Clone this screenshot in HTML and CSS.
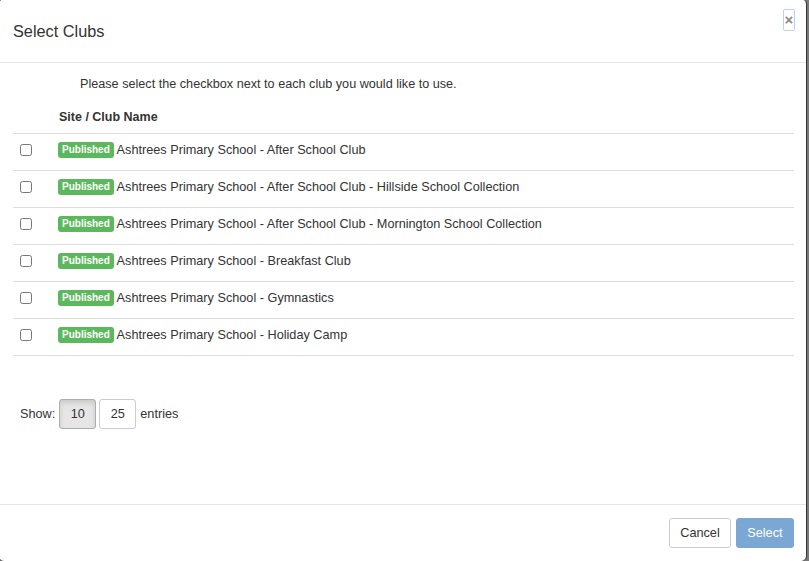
FILE: index.html
```html
<!DOCTYPE html>
<html lang="en">
<head>
  <meta charset="UTF-8">
  <title>Select Clubs</title>
  <link rel="stylesheet" href="styles.css">
</head>
<body>
  <div class="modal-content">
    <div class="modal-header">
      <h4 class="modal-title">Select Clubs</h4>
      <button type="button" class="close">&times;</button>
    </div>
    <div class="modal-body">
      <p class="intro">Please select the checkbox next to each club you would like to use.</p>
      <table class="table">
        <thead>
          <tr>
            <th class="col-check"></th>
            <th>Site / Club Name</th>
          </tr>
        </thead>
        <tbody>
          <tr>
            <td class="col-check"><input type="checkbox"></td>
            <td><span class="label">Published</span> Ashtrees Primary School - After School Club</td>
          </tr>
          <tr>
            <td class="col-check"><input type="checkbox"></td>
            <td><span class="label">Published</span> Ashtrees Primary School - After School Club - Hillside School Collection</td>
          </tr>
          <tr>
            <td class="col-check"><input type="checkbox"></td>
            <td><span class="label">Published</span> Ashtrees Primary School - After School Club - Mornington School Collection</td>
          </tr>
          <tr>
            <td class="col-check"><input type="checkbox"></td>
            <td><span class="label">Published</span> Ashtrees Primary School - Breakfast Club</td>
          </tr>
          <tr>
            <td class="col-check"><input type="checkbox"></td>
            <td><span class="label">Published</span> Ashtrees Primary School - Gymnastics</td>
          </tr>
          <tr>
            <td class="col-check"><input type="checkbox"></td>
            <td><span class="label">Published</span> Ashtrees Primary School - Holiday Camp</td>
          </tr>
        </tbody>
      </table>
      <div class="page-length">
        <span>Show:</span>
        <button type="button" class="btn btn-sm active">10</button>
        <button type="button" class="btn btn-sm">25</button>
        <span>entries</span>
      </div>
    </div>
    <div class="modal-footer">
      <button type="button" class="btn">Cancel</button>
      <button type="button" class="btn btn-primary" disabled>Select</button>
    </div>
  </div>
</body>
</html>
```

FILE: styles.css
```css
html, body {
  height: 100%;
}
body {
  margin: 0;
  background-color: #7a7a7a;
  font-family: "Liberation Sans", Arial, Helvetica, sans-serif;
  font-size: 12.7px;
  line-height: 20px;
  color: #333;
  overflow: hidden;
}
.modal-content {
  box-sizing: border-box;
  width: 809px;
  height: 564px;
  margin: -2px 0 0 -2px;
  background-color: #fff;
  border: 1px solid #333;
  border-radius: 6px;
  display: flex;
  flex-direction: column;
}
.modal-header {
  height: 64px;
  box-sizing: border-box;
  padding: 0 11px 0 14px;
  border-bottom: 1px solid #e5e5e5;
  display: flex;
  align-items: center;
  justify-content: space-between;
}
.modal-title {
  margin: 1px 0 0 0;
  font-size: 16.3px;
  font-weight: normal;
  line-height: 25px;
}
.close {
  align-self: flex-start;
  margin-top: 10px;
  padding: 0;
  width: 12px;
  height: 22px;
  background: transparent;
  border: 1px solid #b9d1f3;
  border-radius: 2px;
  font-family: "Liberation Sans", Arial, sans-serif;
  font-size: 15px;
  font-weight: bold;
  line-height: 18px;
  color: #888;
  cursor: pointer;
}
.modal-body {
  flex: 1;
  padding: 10px 12px 0 14px;
}
.intro {
  margin: 0 0 5px 0;
  padding-top: 1px;
  padding-left: 67px;
  font-size: 12.65px;
}
.table {
  width: 100%;
  border-collapse: collapse;
}
.table th {
  text-align: left;
  font-size: 12.5px;
  padding: 8px 8px 6px 10px;
  border-bottom: 1px solid #ddd;
}
.table td {
  padding: 6px 8px 10px 9px;
  border-bottom: 1px solid #ddd;
  vertical-align: middle;
}
.table .col-check {
  width: 29px;
  padding-left: 7px;
  padding-right: 0;
}
.table input[type="checkbox"] {
  margin: 0;
  width: 12px;
  height: 12px;
  display: block;
}
.label {
  display: inline-block;
  padding: 2px 4px;
  font-size: 10px;
  font-weight: bold;
  line-height: 12px;
  color: #fff;
  background-color: #5cb85c;
  border-radius: 3px;
  vertical-align: 1px;
}
.page-length {
  margin-top: 43px;
  padding-left: 7px;
  display: flex;
  align-items: center;
  gap: 4px;
  font-size: 12.7px;
}
.page-length .btn {
  margin-left: -1px;
}
.page-length .btn.active {
  margin-left: 0;
}
.btn {
  box-sizing: border-box;
  height: 30px;
  padding: 0 10px;
  font-family: "Liberation Sans", Arial, sans-serif;
  font-size: 12.7px;
  color: #333;
  background-color: #fff;
  border: 1px solid #ccc;
  border-radius: 3px;
  cursor: pointer;
}
.btn-sm {
  width: 37px;
  padding: 0;
}
.btn.active {
  background-color: #e6e6e6;
  border-color: #adadad;
  box-shadow: inset 0 3px 5px rgba(0, 0, 0, .125);
}
.btn-primary {
  color: #fff;
  background-color: #7aa7d3;
  border-color: #7aa7d3;
}
.modal-footer {
  padding: 13px 12px 13px 0;
  border-top: 1px solid #e5e5e5;
  display: flex;
  justify-content: flex-end;
  gap: 5px;
}
.modal-footer .btn {
  padding: 0 10px;
}
.modal-footer .btn-primary {
  padding: 0 10.5px;
}
```
